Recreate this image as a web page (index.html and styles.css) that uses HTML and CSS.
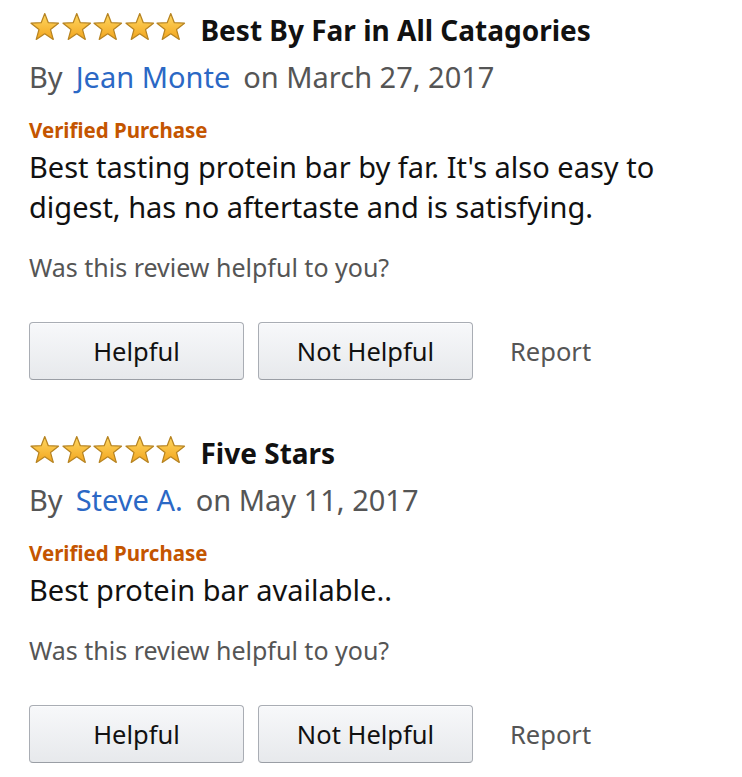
FILE: index.html
```html
<!DOCTYPE html>
<html lang="en">
<head>
<meta charset="utf-8">
<title>Reviews</title>
<link rel="stylesheet" href="styles.css">
</head>
<body>
<svg width="0" height="0" class="defs" aria-hidden="true">
  <defs>
    <linearGradient id="starFill" x1="0" y1="0" x2="0" y2="1">
      <stop offset="0" stop-color="#ffd862"/>
      <stop offset="1" stop-color="#f2a51e"/>
    </linearGradient>
    <symbol id="star" viewBox="0 0 32 30">
      <path d="M16 1.6 L19.7 11.1 L30.2 11.6 L22 18.2 L24.8 28.4 L16 22.6 L7.2 28.4 L10 18.2 L1.8 11.6 L12.3 11.1 Z" fill="url(#starFill)" stroke="#b78422" stroke-width="1.3" stroke-linejoin="round"/>
    </symbol>
  </defs>
</svg>

<div class="review">
  <div class="head">
    <span class="stars">
      <svg class="star"><use href="#star"/></svg><svg class="star"><use href="#star"/></svg><svg class="star"><use href="#star"/></svg><svg class="star"><use href="#star"/></svg><svg class="star"><use href="#star"/></svg>
    </span>
    <span class="title">Best By Far in All Catagories</span>
  </div>
  <div class="byline"><span>By</span><a class="author">Jean Monte</a><span>on March 27, 2017</span></div>
  <div class="verified">Verified Purchase</div>
  <p class="text">Best tasting protein bar by far. It's also easy to digest, has no aftertaste and is satisfying.</p>
  <div class="question">Was this review helpful to you?</div>
  <div class="actions">
    <button class="btn">Helpful</button>
    <button class="btn">Not Helpful</button>
    <span class="report">Report</span>
  </div>
</div>

<div class="review">
  <div class="head">
    <span class="stars">
      <svg class="star"><use href="#star"/></svg><svg class="star"><use href="#star"/></svg><svg class="star"><use href="#star"/></svg><svg class="star"><use href="#star"/></svg><svg class="star"><use href="#star"/></svg>
    </span>
    <span class="title">Five Stars</span>
  </div>
  <div class="byline"><span>By</span><a class="author">Steve A.</a><span>on May 11, 2017</span></div>
  <div class="verified">Verified Purchase</div>
  <p class="text">Best protein bar available..</p>
  <div class="question">Was this review helpful to you?</div>
  <div class="actions">
    <button class="btn">Helpful</button>
    <button class="btn">Not Helpful</button>
    <span class="report">Report</span>
  </div>
</div>
</body>
</html>
```

FILE: styles.css
```css
html, body {
  margin: 0;
  padding: 0;
  background: #ffffff;
}

body {
  font-family: "Noto Sans", "Open Sans", sans-serif;
  color: #111111;
  padding: 8px 0 0 29px;
}

.defs {
  position: absolute;
  width: 0;
  height: 0;
  overflow: hidden;
}

.review {
  margin-bottom: 51px;
}

.head {
  display: flex;
  align-items: center;
  height: 40px;
}

.stars {
  display: flex;
  margin-right: 14px;
  margin-top: -3px;
}

.star {
  width: 31.5px;
  height: 29px;
  display: block;
}

.title {
  font-size: 28px;
  font-weight: 700;
  line-height: 40px;
  margin-top: 3px;
  color: #111111;
}

.byline {
  display: flex;
  gap: 13px;
  margin-top: 9px;
  font-size: 29px;
  line-height: 40px;
  color: #555555;
}

.author {
  color: #2b68c5;
  text-decoration: none;
}

.verified {
  margin-top: 19px;
  font-size: 20.5px;
  line-height: 28px;
  font-weight: 700;
  color: #c45500;
}

.text {
  margin: 3px 0 0;
  font-size: 29px;
  line-height: 40px;
  color: #111111;
  max-width: 660px;
}

.question {
  margin-top: 24px;
  font-size: 25px;
  line-height: 32px;
  color: #555555;
}

.actions {
  display: flex;
  align-items: center;
  margin-top: 39px;
}

.btn {
  width: 215px;
  height: 58px;
  margin-right: 14px;
  border: 1px solid #a9adb4;
  border-bottom-color: #9a9ea5;
  border-radius: 4px;
  background: linear-gradient(#f7f8fa, #e7e9ec);
  box-shadow: inset 0 1px 0 rgba(255, 255, 255, 0.6);
  font-family: "Noto Sans", "Open Sans", sans-serif;
  font-size: 25.5px;
  color: #111111;
  padding: 0;
}

.report {
  margin-left: 23px;
  font-size: 25.5px;
  color: #555555;
}
```
